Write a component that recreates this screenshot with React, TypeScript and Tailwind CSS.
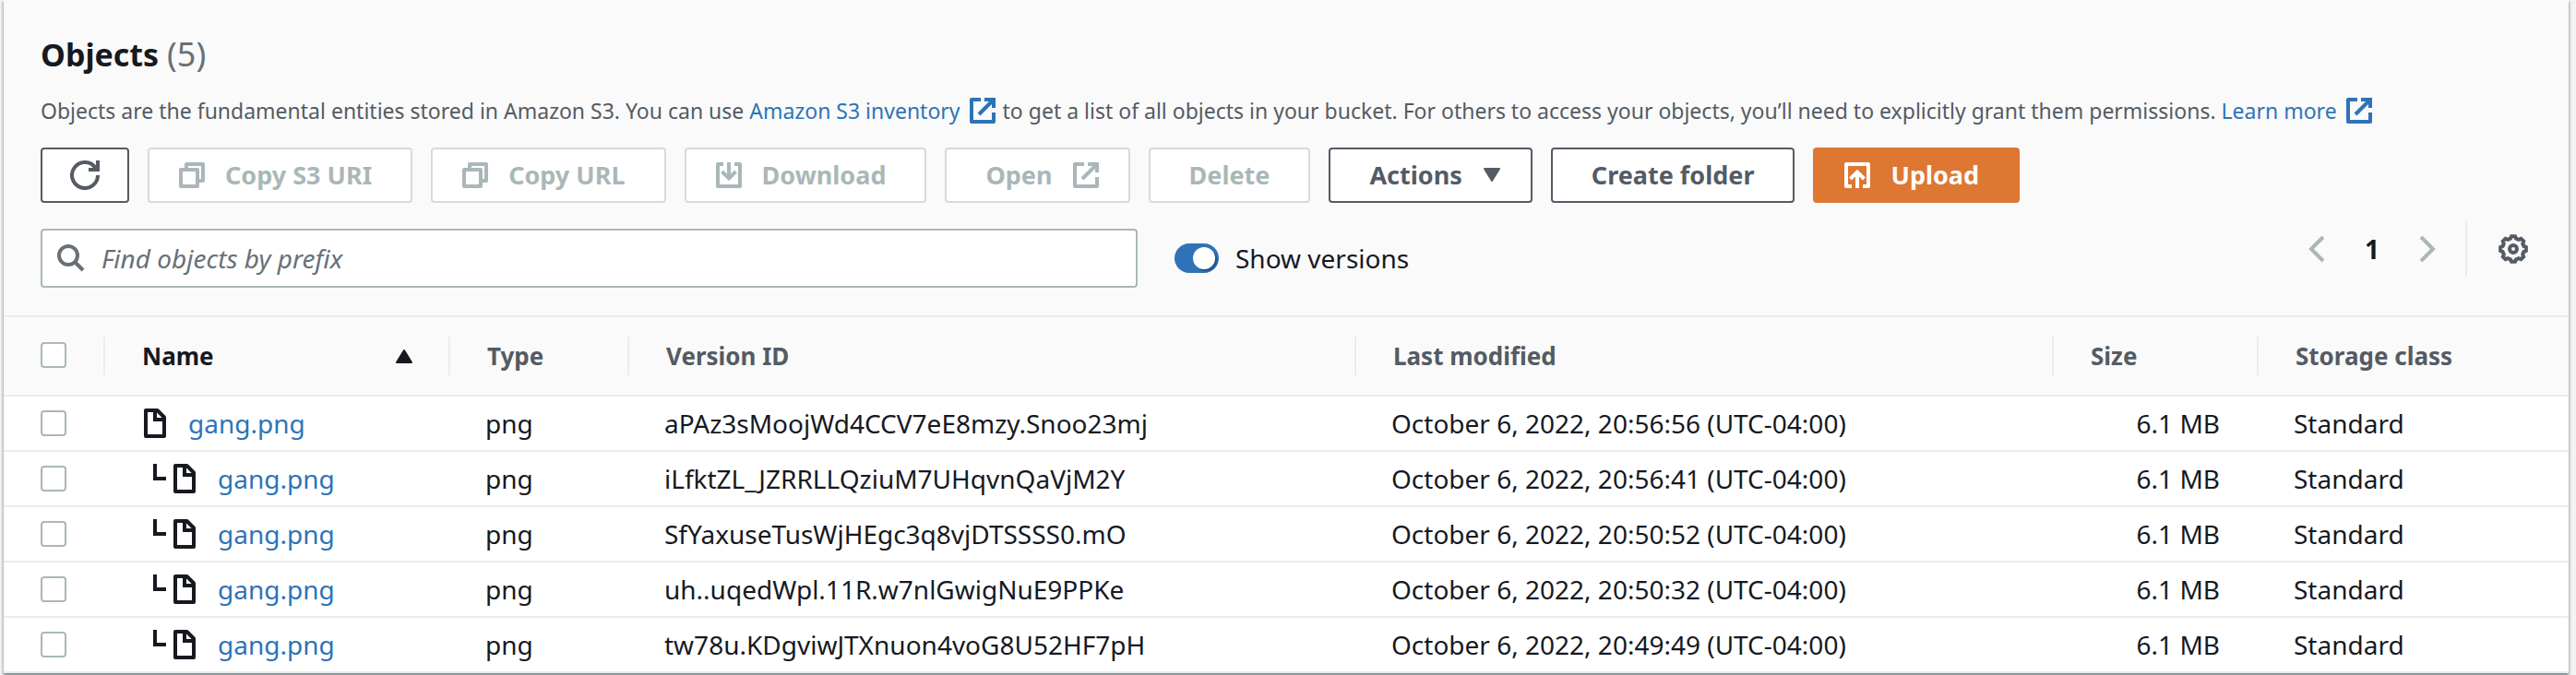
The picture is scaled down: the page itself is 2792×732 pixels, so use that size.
import type { ReactNode } from "react";

const versions = [
  { id: "aPAz3sMoojWd4CCV7eE8mzy.Snoo23mj", modified: "October 6, 2022, 20:56:56 (UTC-04:00)" },
  { id: "iLfktZL_JZRRLLQziuM7UHqvnQaVjM2Y", modified: "October 6, 2022, 20:56:41 (UTC-04:00)" },
  { id: "SfYaxuseTusWjHEgc3q8vjDTSSSS0.mO", modified: "October 6, 2022, 20:50:52 (UTC-04:00)" },
  { id: "uh..uqedWpl.11R.w7nlGwigNuE9PPKe", modified: "October 6, 2022, 20:50:32 (UTC-04:00)" },
  { id: "tw78u.KDgviwJTXnuon4voG8U52HF7pH", modified: "October 6, 2022, 20:49:49 (UTC-04:00)" },
];

const stroke = { fill: "none", stroke: "currentColor", strokeWidth: 4, "aria-hidden": true } as const;

function RefreshIcon() {
  return (
    <svg viewBox="0 0 32 32" className="size-8" {...stroke}>
      <path d="M30 16A14 14 0 1 1 27.5 8" />
      <path d="M30 0v10H20" />
    </svg>
  );
}

function CopyIcon() {
  return (
    <svg viewBox="0 0 28 28" className="size-7" strokeLinejoin="round" {...stroke}>
      <rect x="2" y="8" width="18" height="18" />
      <path d="M8 7V2h18v18h-7" />
    </svg>
  );
}

function DownloadIcon() {
  return (
    <svg viewBox="0 0 28 28" className="size-7" strokeLinejoin="round" {...stroke}>
      <path d="M8 2H2v24h24V2h-6" />
      <path d="M14 0v17" />
      <path d="M6.500 10l7.500 7.500 7.500-7.500" strokeLinejoin="miter" />
    </svg>
  );
}

function UploadIcon() {
  return (
    <svg viewBox="0 0 28 28" className="size-7" strokeLinejoin="round" {...stroke}>
      <path d="M8 26H2V2h24v24h-6" />
      <path d="M14 28V11" />
      <path d="M6.500 18l7.500-7.500 7.500 7.500" strokeLinejoin="miter" />
    </svg>
  );
}

function ExternalIcon({ className = "size-7" }: { className?: string }) {
  return (
    <svg viewBox="0 0 28 28" className={className} {...stroke}>
      <path d="M12 2H2v24h24V16" strokeLinejoin="round" />
      <path d="M16 2h10v9" />
      <path d="M26 2L10 18" />
    </svg>
  );
}

function SearchIcon() {
  return (
    <svg viewBox="0 0 30 30" className="size-[30px] shrink-0" {...stroke}>
      <circle cx="12" cy="12" r="10" />
      <path d="M19 19l9 9" />
    </svg>
  );
}

function FileIcon() {
  return (
    <svg viewBox="0 0 24 32" className="h-8 w-6 shrink-0" strokeLinejoin="round" {...stroke}>
      <path d="M2 2h12.500l7.500 7.500V30H2z" />
      <path d="M12 2v10h10" strokeLinejoin="miter" />
    </svg>
  );
}

function BranchIcon() {
  return (
    <svg viewBox="0 0 14 18" className="h-[18px] w-[14px] shrink-0" {...stroke}>
      <path d="M2 0v16h12" />
    </svg>
  );
}

function Chevron({ d }: { d: string }) {
  return (
    <svg viewBox="0 0 18 30" className="h-[30px] w-[18px]" {...stroke}>
      <path d={d} />
    </svg>
  );
}

function gearPath() {
  const points: string[] = [];
  for (let tooth = 0; tooth < 8; tooth++) {
    for (const [offset, radius] of [[-15, 11.8], [-8, 14], [8, 14], [15, 11.8]]) {
      const a = ((tooth * 45 + offset) * Math.PI) / 180;
      points.push(`${(16 + radius * Math.cos(a)).toFixed(2)} ${(16 + radius * Math.sin(a)).toFixed(2)}`);
    }
  }
  return `M${points.join("L")}z`;
}

function GearIcon() {
  return (
    <svg viewBox="0 0 32 32" className="size-8" {...stroke}>
      <path d={gearPath()} />
      <circle cx="16" cy="16" r="4" />
    </svg>
  );
}

function Triangle({ d }: { d: string }) {
  return (
    <svg viewBox="0 0 20 16" className="h-4 w-5 shrink-0" fill="currentColor" stroke="currentColor" strokeWidth="2" strokeLinejoin="round" aria-hidden="true">
      <path d={d} />
    </svg>
  );
}

const looks = {
  normal: "border-[#545b64] bg-white text-[#545b64]",
  disabled: "border-[#d5dbdb] bg-white text-[#aab7b8]",
  primary: "border-[#de7732] bg-[#de7732] text-white",
};

function Button({
  look = "normal",
  before,
  after,
  label,
  children,
}: {
  look?: keyof typeof looks;
  before?: ReactNode;
  after?: ReactNode;
  label?: string;
  children?: ReactNode;
}) {
  const start = before ? "pl-8" : "pl-[42px]";
  const end = after ? "pr-8" : "pr-[42px]";
  return (
    <button
      type="button"
      disabled={look === "disabled"}
      aria-label={label}
      className={`flex h-15 items-center gap-[22px] rounded-sm border-2 text-[27px] font-bold whitespace-nowrap ${children ? `${start} ${end}` : "px-[30px]"} ${looks[look]}`}
    >
      {before}
      {children}
      {after}
    </button>
  );
}

function Check({ label }: { label: string }) {
  return (
    <input
      type="checkbox"
      aria-label={label}
      className="block size-7 appearance-none rounded-sm border-2 border-[#aab7b8] bg-white checked:bg-[#2e73b8]"
    />
  );
}

function HeaderCell({ children, sorted, last }: { children: ReactNode; sorted?: boolean; last?: boolean }) {
  return (
    <th
      scope="col"
      aria-sort={sorted ? "ascending" : undefined}
      className={`h-[86px] border-b-2 border-[#eaeded] p-0 text-left ${sorted ? "text-[#16191f]" : "text-[#545b64]"}`}
    >
      <div
        className={`flex h-[42px] items-center justify-between border-[#eaeded] pr-[38px] pl-10 text-[26px] whitespace-nowrap ${last ? "" : "border-r-2"}`}
      >
        {children}
        {sorted && <Triangle d="M10 2L18 15H2z" />}
      </div>
    </th>
  );
}

const cell = "h-15 border-b-2 border-[#eaeded] p-0 whitespace-nowrap";
const textCell = `${cell} pl-[38px]`;
const link = "text-[#2e73b8] hover:underline";

export default function App() {
  return (
    <div className="bg-[#f2f3f3] pr-2 pb-0.5 pl-1 font-['Noto_Sans','Open_Sans',sans-serif] text-[28px] leading-9 text-[#16191f]">
      <section className="bg-white shadow-[0_2px_2px_rgba(0,28,36,0.3),2px_2px_2px_rgba(0,28,36,0.15),-2px_2px_2px_rgba(0,28,36,0.15)]">
        <header className="border-b-2 border-[#eaeded] bg-[#fafafa] px-10 pt-9 pb-[30px]">
          <h2 className="text-[34px] leading-[46px] font-bold">
            Objects <span className="text-[36px] font-normal text-[#687078]">(5)</span>
          </h2>
          <p className="mt-5 text-[23px] text-[#545b64]">
            Objects are the fundamental entities stored in Amazon S3. You can use{" "}
            <a href="#inventory" className={link}>
              Amazon S3 inventory
              <ExternalIcon className="mr-2 ml-2.5 inline size-7 align-[-5px]" />
            </a>
            to get a list of all objects in your bucket. For others to access your objects, you’ll need to explicitly
            grant them permissions.{" "}
            <a href="#learn-more" className={link}>
              Learn more
              <ExternalIcon className="mr-2 ml-2.5 inline size-7 align-[-5px]" />
            </a>
          </p>

          <div className="mt-[22px] flex flex-wrap gap-5">
            <Button label="Refresh" before={<RefreshIcon />} />
            <Button look="disabled" before={<CopyIcon />}>Copy S3 URI</Button>
            <Button look="disabled" before={<CopyIcon />}>Copy URL</Button>
            <Button look="disabled" before={<DownloadIcon />}>Download</Button>
            <Button look="disabled" after={<ExternalIcon />}>Open</Button>
            <Button look="disabled">Delete</Button>
            <Button after={<Triangle d="M2 1H18L10 14z" />}>Actions</Button>
            <Button>Create folder</Button>
            <Button look="primary" before={<UploadIcon />}>Upload</Button>
          </div>

          <div className="mt-5 flex items-start justify-between">
            <div className="flex grow items-center gap-10 pt-2">
              <label className="flex h-16 w-full max-w-[1189px] items-center gap-[18px] rounded-sm border-2 border-[#aab7b8] bg-white px-4 text-[#687078]">
                <SearchIcon />
                <input
                  type="search"
                  aria-label="Find objects by prefix"
                  placeholder="Find objects by prefix"
                  className="h-full grow bg-transparent outline-none placeholder:text-[#687078] placeholder:italic"
                />
              </label>
              <label className="flex items-center gap-[18px] whitespace-nowrap">
                <input
                  type="checkbox"
                  role="switch"
                  defaultChecked
                  className="flex h-8 w-12 appearance-none items-center rounded-full bg-[#879596] px-1 before:size-6 before:rounded-full before:bg-white before:shadow-[2px_2px_1px_rgba(0,28,36,0.35)] checked:justify-end checked:bg-[#2e73b8]"
                />
                Show versions
              </label>
            </div>
            <div className="flex h-15 items-center">
              <nav aria-label="Pagination" className="flex items-center pr-8">
                <button type="button" disabled aria-label="Previous page" className="text-[#aab7b8]">
                  <Chevron d="M16 2L3 15l13 13" />
                </button>
                <button type="button" aria-current="page" className="w-[102px] text-center font-bold">
                  1
                </button>
                <button type="button" disabled aria-label="Next page" className="text-[#aab7b8]">
                  <Chevron d="M2 2l13 13L2 28" />
                </button>
              </nav>
              <div className="flex h-full items-center border-l-2 border-[#eaeded] pr-1 pl-[34px]">
                <button type="button" aria-label="Preferences" className="text-[#545b64]">
                  <GearIcon />
                </button>
              </div>
            </div>
          </div>
        </header>

        <table className="w-full table-fixed border-separate border-spacing-0">
          <colgroup>
            <col className="w-[110px]" />
            <col className="w-[374px]" />
            <col className="w-[194px]" />
            <col className="w-[788px]" />
            <col className="w-[756px]" />
            <col className="w-[222px]" />
            <col />
          </colgroup>
          <thead className="bg-[#fafafa]">
            <tr>
              <th scope="col" className="h-[86px] border-b-2 border-[#eaeded] p-0">
                <div className="flex h-[42px] items-start border-r-2 border-[#eaeded] pt-1.5 pl-10">
                  <Check label="Select all objects" />
                </div>
              </th>
              <HeaderCell sorted>Name</HeaderCell>
              <HeaderCell>Type</HeaderCell>
              <HeaderCell>Version ID</HeaderCell>
              <HeaderCell>Last modified</HeaderCell>
              <HeaderCell>Size</HeaderCell>
              <HeaderCell last>Storage class</HeaderCell>
            </tr>
          </thead>
          <tbody>
            {versions.map((version, index) => (
              <tr key={version.id}>
                <td className={`${cell} pl-10`}>
                  <Check label={`Select version ${version.id}`} />
                </td>
                <td className={`${cell} pl-[42px]`}>
                  <div className={index > 0 ? "flex gap-2 pl-2.5" : "flex"}>
                    {index > 0 && <BranchIcon />}
                    <div className="flex items-center gap-6">
                      <FileIcon />
                      <a href={`#${version.id}`} className={`leading-8 ${link}`}>
                        gang.png
                      </a>
                    </div>
                  </div>
                </td>
                <td className={textCell}>png</td>
                <td className={textCell}>{version.id}</td>
                <td className={textCell}>{version.modified}</td>
                <td className={`${textCell} pr-[42px] text-right`}>6.1 MB</td>
                <td className={textCell}>Standard</td>
              </tr>
            ))}
          </tbody>
        </table>
      </section>
    </div>
  );
}
